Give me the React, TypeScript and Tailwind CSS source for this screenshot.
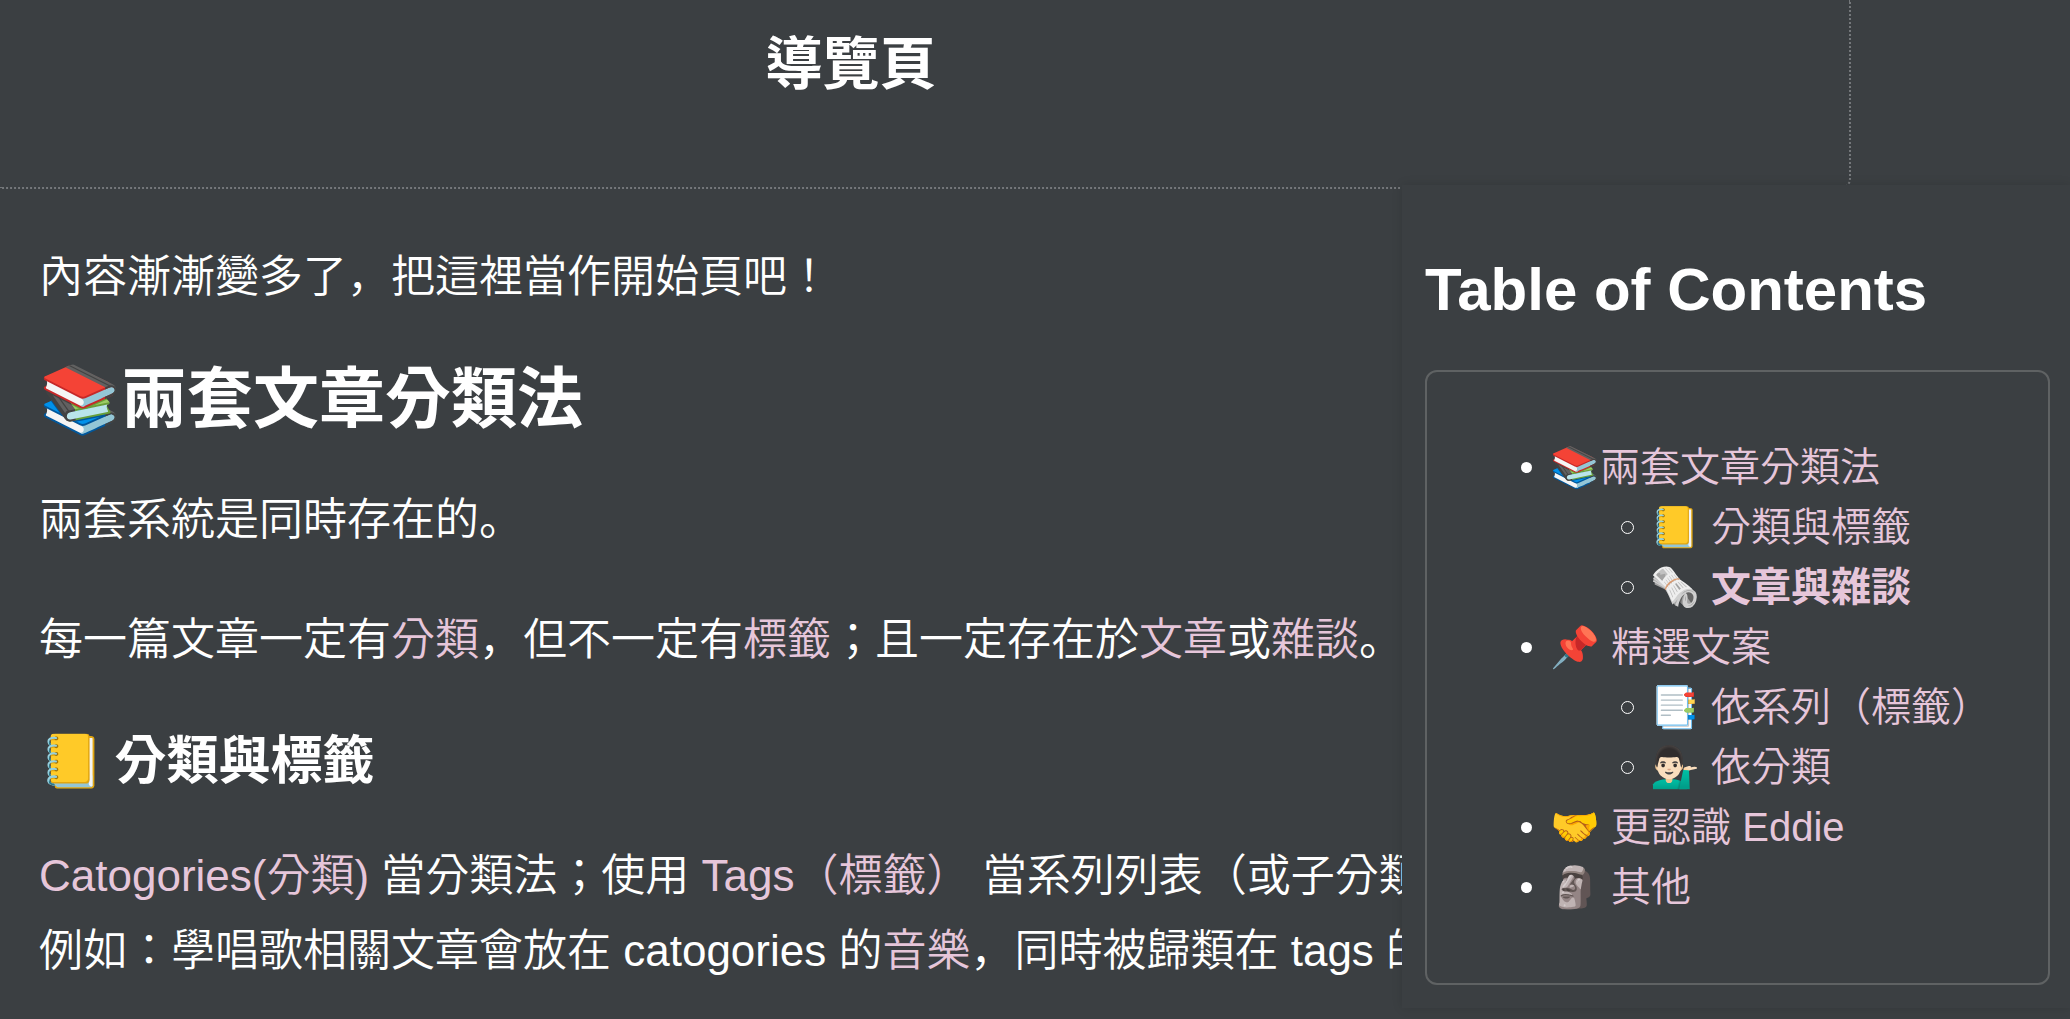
const cjk = '"Liberation Sans","Noto Sans CJK KR",sans-serif';

const Pink = ({ children }: { children: React.ReactNode }) => (
    <a className="text-[#e6c6da]">{children}</a>
);

const tocItems = [
    { label: '📚兩套文章分類法', children: [{ label: '📒 分類與標籤' }, { label: '🗞️ 文章與雜談', bold: true }] },
    { label: '📌 精選文案', children: [{ label: '📑 依系列（標籤）' }, { label: '💁🏻‍♂️ 依分類' }] },
    { label: '🤝 更認識 Eddie', children: [] },
    { label: '🗿 其他', children: [] },
];

export default function App() {
    return (
        <div
            className="relative h-[1019px] w-[2070px] overflow-hidden bg-[#3b3f42] text-[44px] leading-[60px] font-[350] text-white"
            style={{ fontFamily: cjk }}
        >
            <header className="flex h-[189px] w-[1851px] justify-center rounded-br-[10px] border-r-2 border-b-2 border-dotted border-[#74777a] pt-[27px] pr-[147px]">
                <h1 className="text-[57px] leading-[75px] font-bold">導覽頁</h1>
            </header>

            <main className="pt-[50px] pl-[39px] whitespace-nowrap">
                <p className="leading-[75px]">內容漸漸變多了，把這裡當作開始頁吧！</p>
                <h2 className="mt-[45px] text-[66px] leading-[80px] font-bold">📚兩套文章分類法</h2>
                <p className="mt-[43px] leading-[75px]">兩套系統是同時存在的。</p>
                <p className="mt-[45px] leading-[75px]">
                    每一篇文章一定有<Pink>分類</Pink>，但不一定有<Pink>標籤</Pink>；且一定存在於<Pink>文章</Pink>或<Pink>雜談</Pink>。
                </p>
                <h3 className="mt-[47px] text-[52px] leading-[75px] font-bold">
                    <span className="mr-[-4px]">📒</span> 分類與標籤
                </h3>
                <p className="mt-[39px] leading-[75px]">
                    <Pink>Catogories(分類)</Pink> 當分類法；使用 <Pink>Tags（標籤）</Pink> 當系列列表（或子分類）。
                </p>
                <p className="leading-[75px]">
                    例如：學唱歌相關文章會放在 catogories 的<Pink>音樂</Pink>，同時被歸類在 tags 的系列。
                </p>
            </main>

            <aside className="absolute top-[185px] left-[1402px] h-[823px] w-[668px] bg-[#3b3f42] pt-[65px] pr-[20px] pl-[23px] shadow-[0_0_10px_rgba(0,0,0,0.12)]">
                <h2 className="text-[60px] leading-[80px] font-bold">Table of Contents</h2>
                <div className="mt-[40px] h-[615px] rounded-[12px] border-2 border-[#5f6263] pt-[65px] pl-[123px] text-[40px]">
                    <ul>
                        {tocItems.map((item) => (
                            <li
                                key={item.label}
                                className="relative before:absolute before:top-[25px] before:left-[-29px] before:size-[11px] before:rounded-full before:bg-white"
                            >
                                <Pink>{item.label}</Pink>
                                {item.children.length > 0 && (
                                    <ul className="pl-[100px]">
                                        {item.children.map((child) => (
                                            <li
                                                key={child.label}
                                                className={`relative before:absolute before:top-[24px] before:left-[-29px] before:size-[13px] before:rounded-full before:border-[1.5px] before:border-white ${child.bold ? 'font-bold' : ''}`}
                                            >
                                                <Pink>{child.label}</Pink>
                                            </li>
                                        ))}
                                    </ul>
                                )}
                            </li>
                        ))}
                    </ul>
                </div>
            </aside>
        </div>
    );
}
